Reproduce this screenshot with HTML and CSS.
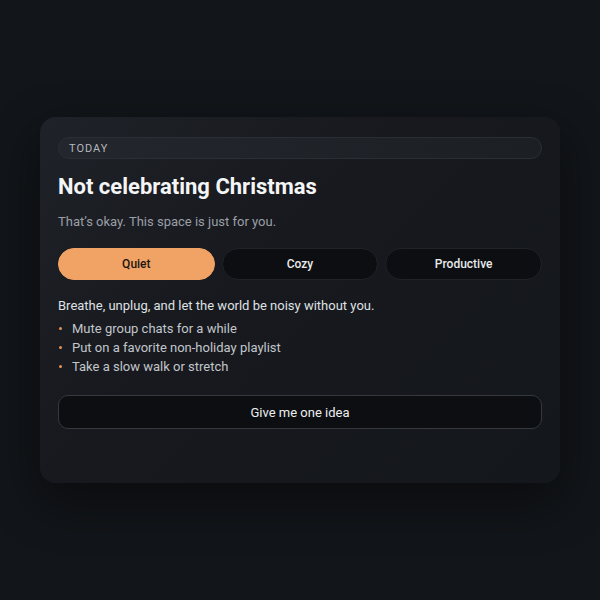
FILE: index.html
```html
<!DOCTYPE html>
<html>
<head>
<meta charset="utf-8">
<link rel="stylesheet" href="styles.css">
</head>
<body>
<div class="stage">
  <div class="card">
    <div class="pill">TODAY</div>
    <h1 class="title">Not celebrating Christmas</h1>
    <p class="sub">That’s okay. This space is just for you.</p>
    <div class="modes">
      <button class="mode active">Quiet</button>
      <button class="mode">Cozy</button>
      <button class="mode">Productive</button>
    </div>
    <p class="lead">Breathe, unplug, and let the world be noisy without you.</p>
    <ul class="list">
      <li>Mute group chats for a while</li>
      <li>Put on a favorite non-holiday playlist</li>
      <li>Take a slow walk or stretch</li>
    </ul>
    <button class="idea">Give me one idea</button>
  </div>
</div>
</body>
</html>
```
FILE: styles.css
```css
* { box-sizing: border-box; }
html, body { margin: 0; padding: 0; }
body {
  width: 600px;
  height: 600px;
  background: #121519;
  font-family: Roboto, "Liberation Sans", sans-serif;
  overflow: hidden;
}
.stage {
  width: 600px;
  height: 600px;
  display: flex;
  justify-content: center;
  padding-top: 117px;
}
.card {
  width: 520px;
  height: 366px;
  border-radius: 16px;
  background: linear-gradient(135deg, #1f2228 0%, #17191e 40%, #14171b 100%);
  box-shadow: 0 18px 50px rgba(0,0,0,0.45);
  padding: 20px 18px;
  display: flex;
  flex-direction: column;
}
.pill {
  height: 22px;
  border-radius: 11px;
  border: 1px solid #2b2f35;
  background: linear-gradient(90deg, #23262c, #1c1f24);
  color: #b4b8be;
  font-size: 11px;
  letter-spacing: 1px;
  padding-left: 10px;
  display: flex;
  align-items: center;
}
.title {
  margin: 14px 0 0;
  font-size: 22px;
  font-weight: 700;
  color: #f4f5f6;
  line-height: 28px;
}
.sub {
  margin: 12px 0 0;
  font-size: 13px;
  color: #9a9fa6;
  line-height: 18px;
}
.modes {
  margin-top: 17px;
  display: grid;
  grid-template-columns: 1fr 1fr 1fr;
  gap: 7px;
}
.mode {
  height: 32px;
  border-radius: 16px;
  border: 1px solid #1f2227;
  background: #0c0e11;
  color: #e8eaec;
  font-family: inherit;
  font-size: 12px;
  font-weight: 500;
}
.mode.active {
  background: #f0a365;
  border-color: #f0a365;
  color: #1c1510;
}
.lead {
  margin: 17px 0 0;
  font-size: 13px;
  color: #dfe1e4;
  line-height: 18px;
}
.list {
  list-style: none;
  margin: 4px 0 0;
  padding: 0;
}
.list li {
  position: relative;
  padding-left: 14px;
  font-size: 13px;
  line-height: 19px;
  color: #c2c6cb;
}
.list li::before {
  content: "";
  position: absolute;
  left: 1px;
  top: 8px;
  width: 3px;
  height: 3px;
  border-radius: 50%;
  background: #e0945a;
}
.idea {
  margin-top: 19px;
  height: 34px;
  border-radius: 10px;
  border: 1px solid #34383f;
  background: #0c0e11;
  color: #eceef0;
  font-family: inherit;
  font-size: 13px;
}
```
